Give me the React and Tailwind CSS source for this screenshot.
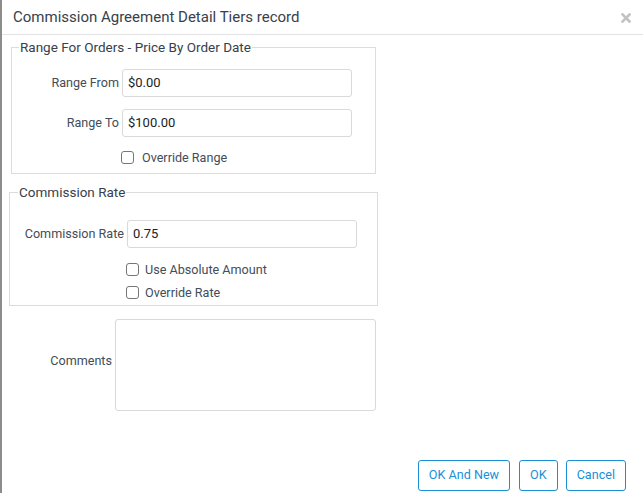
import React from "react";

const font = { fontFamily: "Roboto, 'Noto Sans', sans-serif" };

function Check({ label, gap }) {
  return (
    <label className={`flex items-center ${gap} text-[12.6px] text-[#434d57] leading-[15px]`}>
      <span className="w-[13px] h-[13px] rounded-[3px] border border-[#767676] bg-white inline-block" />
      {label}
    </label>
  );
}

export default function App() {
  return (
    <div
      className="w-[643px] h-[493px] bg-white border-l-2 border-[#8c8c8c] flex flex-col overflow-hidden"
      style={font}
    >
      <div className="h-[35px] flex items-center justify-between border-b border-[#e3e3e3] pl-[11px] pr-[12px] shrink-0">
        <span className="text-[15px] text-[#37414b] leading-[18px]">Commission Agreement Detail Tiers record</span>
        <svg width="10" height="10" viewBox="0 0 10 10" className="mt-[2px]">
          <path d="M1.5 1.5 L8.5 8.5 M8.5 1.5 L1.5 8.5" stroke="#c2c2c2" strokeWidth="2.6" strokeLinecap="square" />
        </svg>
      </div>

      <fieldset className="ml-[9px] mt-[5px] w-[365px] border border-[#dcdcdc] pt-[14px] pb-[8px]">
        <legend className="ml-[7px] px-[1px] text-[13.5px] leading-[15px] text-[#37414b]">
          Range For Orders - Price By Order Date
        </legend>
        <div className="flex flex-col gap-[12px]">
          <div className="flex items-center">
            <span className="w-[107px] text-right text-[12.6px] text-[#434d57]">Range From</span>
            <div className="ml-[3px] w-[230px] h-[28px] border border-[#d9d9d9] rounded-[3px] flex items-center pl-[5px] text-[13px] text-[#222]">$0.00</div>
          </div>
          <div className="flex items-center">
            <span className="w-[107px] text-right text-[12.6px] text-[#434d57]">Range To</span>
            <div className="ml-[3px] w-[230px] h-[28px] border border-[#d9d9d9] rounded-[3px] flex items-center pl-[5px] text-[13px] text-[#222]">$100.00</div>
          </div>
          <div className="pl-[109px] mt-[1px]">
            <Check label="Override Range" gap="gap-[8px]" />
          </div>
        </div>
      </fieldset>

      <fieldset className="ml-[7px] mt-[11px] w-[369px] border border-[#dcdcdc] pt-[20px] pb-[5px]">
        <legend className="ml-[8px] px-[1px] text-[13.5px] leading-[15px] text-[#37414b]">
          Commission Rate
        </legend>
        <div className="flex flex-col">
          <div className="flex items-center">
            <span className="w-[114px] text-right text-[12.6px] text-[#434d57]">Commission Rate</span>
            <div className="ml-[3px] w-[230px] h-[28px] border border-[#d9d9d9] rounded-[3px] flex items-center pl-[5px] text-[13px] text-[#222]">0.75</div>
          </div>
          <div className="pl-[116px] mt-[14px] flex flex-col gap-[8px]">
            <Check label="Use Absolute Amount" gap="gap-[6px]" />
            <Check label="Override Rate" gap="gap-[6px]" />
          </div>
        </div>
      </fieldset>

      <div className="flex items-center mt-[13px]">
        <span className="w-[110px] text-right text-[12.6px] text-[#434d57] mb-[8px]">Comments</span>
        <div className="ml-[3px] w-[261px] h-[92px] border border-[#d9d9d9] rounded-[3px]" />
      </div>

      <div className="mt-auto flex justify-end pr-[17px] pb-[2px]">
        <button className="h-[31px] px-[10px] border border-[#1a8fd6] rounded-[3px] text-[12.6px] text-[#1a8fd6] bg-white">OK And New</button>
        <button className="ml-[9px] h-[31px] px-[10px] border border-[#1a8fd6] rounded-[3px] text-[12.6px] text-[#1a8fd6] bg-white">OK</button>
        <button className="ml-[8px] h-[31px] px-[10px] border border-[#1a8fd6] rounded-[3px] text-[12.6px] text-[#1a8fd6] bg-white">Cancel</button>
      </div>
    </div>
  );
}
